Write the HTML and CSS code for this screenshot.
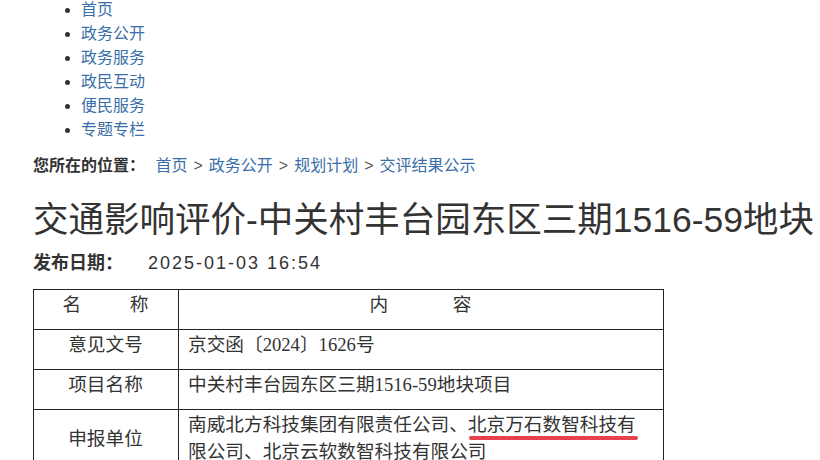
FILE: index.html
```html
<!DOCTYPE html>
<html lang="zh-CN">
<head>
    <meta charset="UTF-8">
    <meta name="viewport" content="width=device-width, initial-scale=1.0">
    <title>交通影响评价-中关村丰台园东区三期1516-59地块</title>
    <link rel="stylesheet" href="styles.css">
</head>
<body>
    <ul class="nav">
        <li><a href="#">首页</a></li>
        <li><a href="#">政务公开</a></li>
        <li><a href="#">政务服务</a></li>
        <li><a href="#">政民互动</a></li>
        <li><a href="#">便民服务</a></li>
        <li><a href="#">专题专栏</a></li>
    </ul>

    <div class="crumbs">
        <span class="here">您所在的位置：</span>
        <a href="#">首页</a><span class="sep">&gt;</span><a href="#">政务公开</a><span class="sep">&gt;</span><a href="#">规划计划</a><span class="sep">&gt;</span><a href="#">交评结果公示</a>
    </div>

    <h1 class="title">交通影响评价-中关村丰台园东区三期1516-59地块</h1>
    <div class="meta"><span class="label">发布日期：</span><span class="date">2025-01-03 16:54</span></div>

    <table class="info">
        <colgroup>
            <col class="name-col">
            <col>
        </colgroup>
        <tr>
            <th class="spaced">名 称</th>
            <th class="spaced wide">内 容</th>
        </tr>
        <tr>
            <td class="key">意见文号</td>
            <td>京交函〔2024〕1626号</td>
        </tr>
        <tr>
            <td class="key">项目名称</td>
            <td>中关村丰台园东区三期1516-59地块项目</td>
        </tr>
        <tr>
            <td class="key">申报单位</td>
            <td>南威北方科技集团有限责任公司、<span class="mark">北京万石数智科技有</span>限公司、北京云软数智科技有限公司</td>
        </tr>
    </table>
</body>
</html>
```

FILE: styles.css
```css
body {
    margin: 0;
    font-family: "Liberation Sans", "Noto Sans CJK SC", sans-serif;
    color: #333;
    overflow-x: hidden;
}
a {
    color: #3a6ea8;
    text-decoration: none;
}
.nav {
    margin: -2px 0 0;
    padding-left: 81px;
    font-size: 16px;
    line-height: 24px;
    color: #333;
}
.crumbs {
    margin: 12px 0 0 33px;
    font-size: 16px;
    line-height: 24px;
}
.crumbs .here {
    font-weight: bold;
    margin-right: 6px;
}
.crumbs .sep {
    margin: 0 6px;
    color: #555;
}
.title {
    margin: 20px 0 0 33px;
    font-size: 35.5px;
    font-weight: normal;
    line-height: 44px;
    white-space: nowrap;
}
.meta {
    margin: 7px 0 0 33px;
    font-size: 18px;
    line-height: 28px;
}
.meta .label {
    font-weight: bold;
    margin-right: 25px;
}
.meta .date {
    letter-spacing: 2px;
}
.info {
    margin: 12px 0 0 33px;
    width: 631px;
    table-layout: fixed;
    border-collapse: collapse;
    font-family: "Liberation Serif", "Noto Sans CJK SC", serif;
    font-size: 14pt;
    line-height: 27px;
    color: #333;
}
.info .name-col {
    width: 145px;
}
.info th, .info td {
    border: 1px solid #222;
    padding: 1px 10px 11px 9px;
    text-align: left;
    vertical-align: middle;
    font-weight: normal;
}
.info th, .info .key {
    text-align: center;
}
.spaced {
    white-space: nowrap;
    word-spacing: 44px;
}
.spaced.wide {
    word-spacing: 60px;
}
/* red marker under the highlighted company name */
.mark {
    position: relative;
}
.mark::after {
    content: "";
    position: absolute;
    left: 1px;
    right: -2px;
    bottom: -5px;
    height: 4px;
    border-radius: 2px;
    background: #e8414e;
}
```
